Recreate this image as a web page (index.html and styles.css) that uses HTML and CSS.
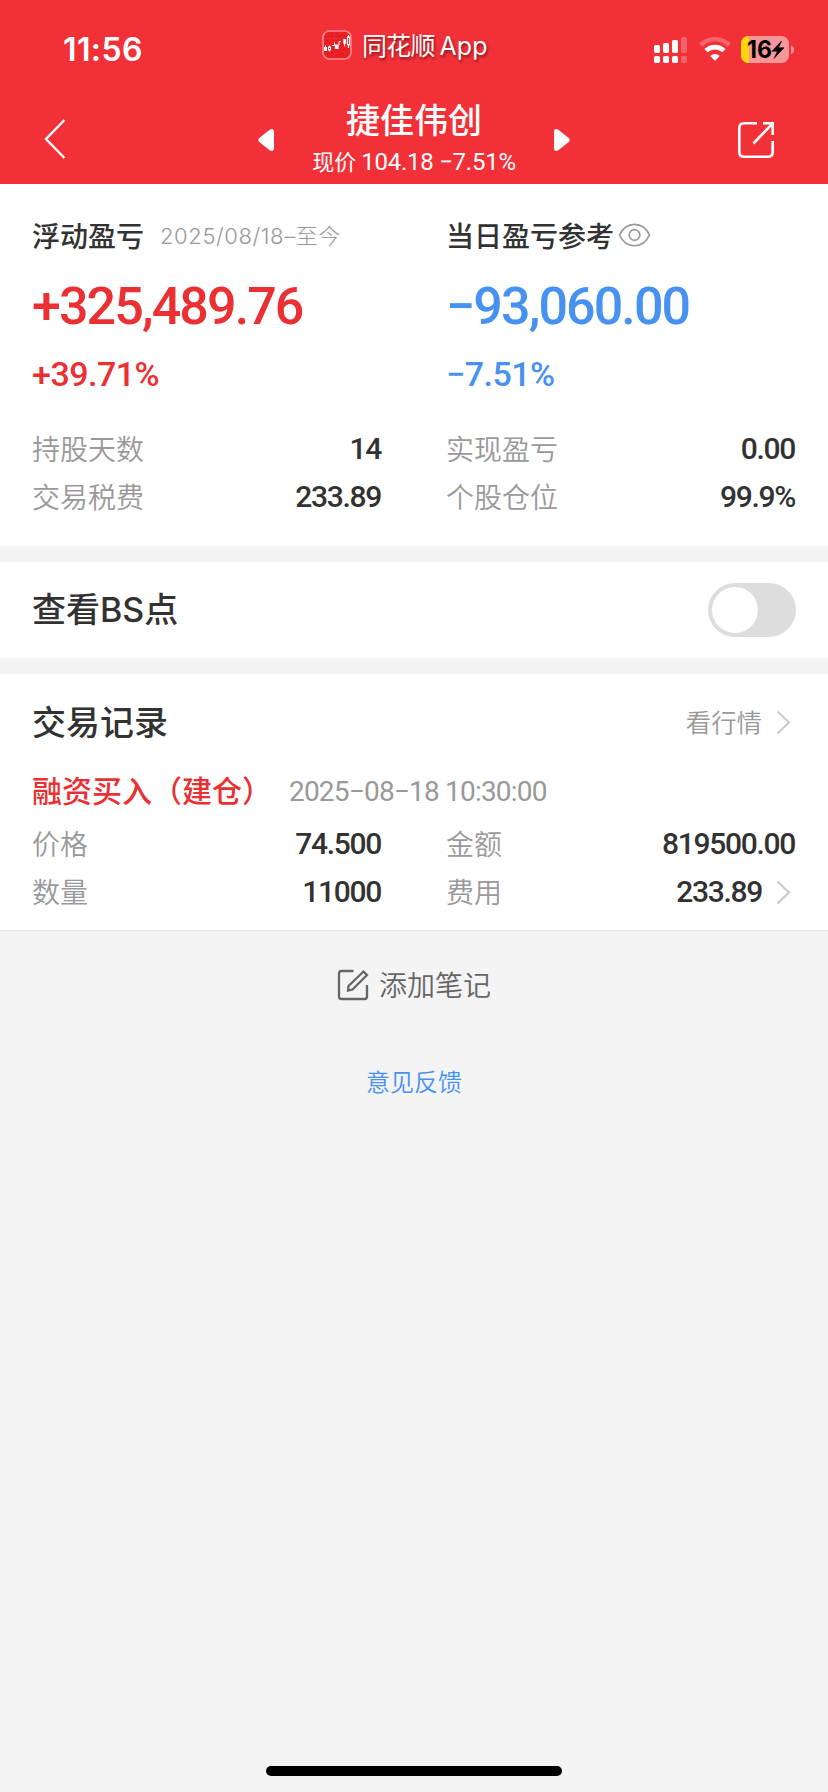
FILE: index.html
```html
<!DOCTYPE html>
<html lang="zh-CN">
<head>
<meta charset="utf-8">
<title>捷佳伟创</title>
<link rel="stylesheet" href="styles.css">
</head>
<body>
<header class="header">
  <div class="status">
    <span class="time">11:56</span>
    <div class="app">
      <svg class="app-icon" width="30" height="30" viewBox="0 0 30 30"><rect x="1" y="1" width="28" height="28" rx="6.5" fill="#e81f24" stroke="#f98b8e" stroke-width="1.6"/><path d="M2 8.500h26M12.500 2v26" stroke="#ee3439" stroke-width=".6"/><g fill="#fff"><rect x="2" y="17" width="3" height="4"/><rect x="13" y="14.500" width="3.600" height="4.500"/><rect x="21.300" y="9" width="2.800" height="5"/></g><g fill="none" stroke="#fff"><path d="M7.500 15.500v6M3.500 17v-1.500M22.700 14v2.500M26.500 5v13M10 15.500h2.500v-3M17 15v-3.500h2"/><rect x="6.500" y="17" width="2" height="3" fill="#e81f24"/><rect x="25.500" y="7" width="2" height="8" fill="#e81f24"/></g></svg>
      <span class="app-name">同花顺<span class="app-latin">App</span></span>
    </div>
    <div class="indicators">
      <svg width="34" height="28" viewBox="0 0 34 28"><g fill="#fff"><rect x="0" y="9" width="6" height="8" rx="1.700"/><rect x="9" y="7" width="6" height="10" rx="1.700"/><rect x="18" y="4" width="6" height="13" rx="1.700"/><rect x="0" y="20" width="6" height="7" rx="1.700"/><rect x="9" y="20" width="6" height="7" rx="1.700"/><rect x="18" y="20" width="6" height="7" rx="1.700"/></g><g fill="#fff" opacity=".25"><rect x="27" y="1" width="6" height="16" rx="1.700"/><rect x="27" y="20" width="6" height="7" rx="1.700"/></g></svg>
      <svg class="wifi" width="32" height="24" viewBox="0 0 32 24"><path d="M1.800 8a20.500 20.500 0 0 1 28.400 0" fill="none" stroke="#fff" stroke-opacity=".25" stroke-width="4.600"/><path d="M7 13.700a13 13 0 0 1 18 0" fill="none" stroke="#fff" stroke-width="4.600"/><path d="M11.300 18.900a6.800 6.800 0 0 1 9.400 0L16 23.700z" fill="#fff"/></svg>
      <svg width="54" height="28" viewBox="0 0 54 28"><defs><clipPath id="cell"><rect width="48" height="27" rx="7.500"/></clipPath></defs><g clip-path="url(#cell)"><rect width="48" height="27" fill="#f8979a"/><rect width="8" height="27" fill="#ffd60a"/></g><path d="M50 9.500c4 1 4 7.500 0 8.500z" fill="#f8979a"/><text x="6" y="22" class="level" textLength="25" lengthAdjust="spacingAndGlyphs">16</text><path d="M40.500 5 31 15.200h5.500L33 22.500l10-10.800h-5.500z" fill="#000" stroke="#000" stroke-width=".6" stroke-linejoin="round"/></svg>
    </div>
  </div>
  <div class="nav">
    <svg width="22" height="40" viewBox="0 0 22 40"><path d="M20.500 1 2 20l18.500 19" fill="none" stroke="#fff" stroke-width="2.400"/></svg>
    <div class="stock">
      <svg width="17" height="24" viewBox="0 0 17 24"><path d="M12 1.500 1.300 10q-2 2 0 4L12 22.500q4 1.500 4-2.500V4q0-4-4-2.500z" fill="#fff"/></svg>
      <div class="stock-info">
        <h1 class="stock-name">捷佳伟创</h1>
        <div class="stock-price">现价 <span class="quote">104.18 −7.51%</span></div>
      </div>
      <svg width="17" height="24" viewBox="0 0 17 24"><path d="M5 1.500 15.700 10q2 2 0 4L5 22.500q-4 1.500-4-2.500V4q0-4 4-2.500z" fill="#fff"/></svg>
    </div>
    <svg class="share" width="38" height="38" viewBox="0 0 38 38" fill="none" stroke="#fff" stroke-width="2.600"><path d="M20 2.300H7q-4.700 0-4.700 4.700v24q0 4.700 4.700 4.700h24q4.700 0 4.700-4.700V20"/><path d="M26 2.300h9.700V14M35.500 2.500 16.500 22.500"/></svg>
  </div>
</header>

<section class="card summary">
  <div class="column">
    <h2 class="caption">浮动盈亏<span class="period">2025/08/18–<span class="period-cjk">至今</span></span></h2>
    <div class="amount up">+325,489.76</div>
    <div class="rate up">+39.71%</div>
    <div class="row"><span class="label">持股天数</span><span class="value">14</span></div>
    <div class="row"><span class="label">交易税费</span><span class="value">233.89</span></div>
  </div>
  <div class="column">
    <h2 class="caption">当日盈亏参考<svg class="eye" width="33" height="24" viewBox="0 0 33 24" fill="none" stroke="#999" stroke-width="1.700"><path d="M1.500 12C8-2.300 25-2.300 31.500 12 25 26.300 8 26.300 1.500 12z"/><circle cx="16.500" cy="12" r="5.300"/></svg></h2>
    <div class="amount down">−93,060.00</div>
    <div class="rate down">−7.51%</div>
    <div class="row"><span class="label">实现盈亏</span><span class="value">0.00</span></div>
    <div class="row"><span class="label">个股仓位</span><span class="value">99.9%</span></div>
  </div>
</section>

<section class="card switch-card">
  <h2 class="title">查看<span class="latin">BS</span>点</h2>
  <span class="toggle"><span class="knob"></span></span>
</section>

<section class="card records">
  <div class="records-head">
    <h2 class="title">交易记录</h2>
    <span class="more"><span class="more-text">看行情</span><svg class="chevron" width="15" height="25" viewBox="0 0 15 25"><path d="M1.500 1.500 13 12.500 1.500 23.500" fill="none" stroke="#ccc" stroke-width="2.200"/></svg></span>
  </div>
  <div class="trade-head"><span class="trade-type">融资买入（建仓）</span><span class="trade-time">2025−08−18 10:30:00</span></div>
  <div class="trade-grid">
    <div class="row"><span class="label">价格</span><span class="value">74.500</span></div>
    <div class="row"><span class="label">金额</span><span class="value">819500.00</span></div>
    <div class="row"><span class="label">数量</span><span class="value">11000</span></div>
    <div class="row"><span class="label">费用</span><span class="value linked">233.89<svg class="chevron" width="15" height="25" viewBox="0 0 15 25"><path d="M1.500 1.500 13 12.500 1.500 23.500" fill="none" stroke="#ccc" stroke-width="2.200"/></svg></span></div>
  </div>
</section>

<footer class="footer">
  <div class="note"><svg width="32" height="32" viewBox="0 0 32 32" fill="none" stroke="#666" stroke-width="2.300"><path d="M16.500 2H4.500Q2 2 2 4.500v23Q2 30 4.500 30h23q2.500 0 2.500-2.500V16"/><path d="M26.500 2.500 11.500 17 11 21.500 15.500 20.500 30 6z"/></svg><span class="note-text">添加笔记</span></div>
  <div class="feedback">意见反馈</div>
</footer>
<div class="home-bar"></div>
</body>
</html>
```
FILE: styles.css
```css
* { box-sizing: border-box; }
body {
  margin: 0;
  width: 828px;
  height: 1792px;
  display: flex;
  flex-direction: column;
  background: #f4f4f4;
  color: #323232;
  font-family: "Noto Sans CJK SC", sans-serif;
  overflow: hidden;
}
svg { display: block; flex: none; }
h1, h2 { margin: 0; font-weight: 500; }

.header { height: 184px; background: #f23038; color: #fff; }
.status { height: 94px; display: grid; grid-template-columns: 322px 1fr auto; }
.time { padding: 30px 0 0 63px; font: 600 32px/40px Inter, sans-serif; letter-spacing: 0.4px; }
.app { display: flex; gap: 10px; padding-top: 30px; height: 60px; align-items: center; }
.app-name { font-size: 25px; line-height: 30px; letter-spacing: -0.8px; text-shadow: 1px 2px 3px rgba(60, 0, 0, .6); }
.app-latin { margin-left: 5px; font-family: Inter, sans-serif; letter-spacing: 0; }
.indicators { display: flex; justify-content: flex-end; padding: 36px 33px 0 0; }
.wifi { margin: 1px 10px 0 11px; }
.level { font: 700 24px Inter, sans-serif; }

.nav { height: 90px; display: grid; grid-template-columns: 1fr auto 1fr; padding: 0 53px 0 44px; }
.nav > svg { margin-top: 25px; }
.nav > .share { margin: 27px 0 0; justify-self: end; }
.stock { display: flex; width: 312px; justify-content: space-between; margin-left: 9px; }
.stock > svg { margin-top: 34px; }
.stock-info { display: flex; flex-direction: column; align-items: center; }
.stock-name { font-size: 34px; line-height: 40px; margin-top: 5px; }
.stock-price { font-size: 22px; line-height: 30px; margin-top: 6px; white-space: nowrap; }
.quote { font-family: Roboto, sans-serif; font-size: 24px; letter-spacing: -0.25px; }

.card { background: #fff; padding: 0 32px; }
.summary { height: 362px; padding-top: 32px; display: grid; grid-template-columns: 1fr 1fr; gap: 64px; }
.caption { display: flex; align-items: center; height: 37px; margin-bottom: 3px; font-size: 28px; line-height: 36px; white-space: nowrap; }
.period { margin-left: 16px; font: 300 22px/36px Inter, sans-serif; letter-spacing: 0.6px; color: #999; }
.period-cjk { font-family: "Noto Sans CJK SC", sans-serif; }
.eye { margin-left: 4px; }
.amount { padding-top: 21px; height: 81px; font: 500 52px/60px Roboto, sans-serif; letter-spacing: -1.9px; }
.rate { margin: 17px 0 31px; font: 500 34px/40px Roboto, sans-serif; letter-spacing: -0.5px; }
.up { color: #ea3033; }
.down { color: #4792f0; }
.row { height: 48px; display: flex; align-items: center; justify-content: space-between; }
.label { padding-bottom: 3px; font-size: 28px; line-height: 40px; font-weight: 350; color: #999; }
.value { display: flex; align-items: center; margin-right: 1px; font: 500 30px/40px Roboto, sans-serif; letter-spacing: -1.3px; }
.linked { margin-right: 0; }

.switch-card { height: 96px; margin: 16px 0; display: flex; align-items: center; justify-content: space-between; }
.title { padding-bottom: 3px; font-size: 34px; line-height: 48px; }
.latin { font-family: Inter, sans-serif; font-weight: 500; }
.toggle { width: 88px; height: 54px; padding: 4px; border-radius: 27px; background: #ddd; }
.knob { display: block; width: 46px; height: 46px; border-radius: 50%; background: #fff; }

.records { height: 257px; border-bottom: 1px solid #eaeaea; }
.records-head { height: 96px; display: flex; align-items: center; justify-content: space-between; }
.more { display: flex; align-items: center; font-size: 25.4px; line-height: 40px; color: #999; font-weight: 350; }
.more-text { padding-bottom: 2px; }
.chevron { margin: 0 5px 0 14px; }
.trade-head { height: 42px; display: flex; align-items: center; margin-bottom: 8px; }
.trade-type { padding-bottom: 4px; font-size: 30px; line-height: 42px; font-weight: 500; color: #ea3033; }
.trade-time { margin-left: 17px; padding-top: 2px; font: 400 28px/42px Roboto, sans-serif; letter-spacing: -0.8px; color: #999; }
.trade-grid { display: grid; grid-template-columns: 1fr 1fr; column-gap: 64px; }

.footer { display: flex; flex-direction: column; align-items: center; padding-top: 34px; }
.note { height: 40px; display: flex; align-items: center; gap: 10px; font-size: 28px; line-height: 40px; font-weight: 350; color: #666; }
.note-text { padding-bottom: 3px; }
.feedback { margin-top: 58px; font-size: 24px; line-height: 36px; font-weight: 350; color: #4792f0; }
.home-bar { width: 296px; height: 10px; border-radius: 5px; margin: auto auto 16px; background: #000; }
```
